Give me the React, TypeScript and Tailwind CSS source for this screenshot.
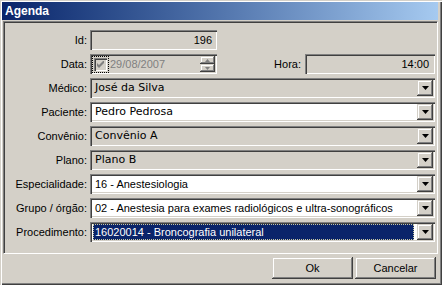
import * as React from "react"

const sunken =
  "shadow-[inset_1px_1px_0_#808080,inset_2px_2px_0_#404040,inset_-1px_-1px_0_#ffffff,inset_-2px_-2px_0_#d4d0c8]"
const raised =
  "shadow-[inset_-1px_-1px_0_#404040,inset_1px_1px_0_#d4d0c8,inset_-2px_-2px_0_#808080,inset_2px_2px_0_#ffffff]"

const tahoma = "font-['Liberation_Sans',Arial,sans-serif] text-[11px]"
const wide = "font-['DejaVu_Sans',Verdana,sans-serif] text-[11px]"

function Arrow() {
  return (
    <svg width="7" height="4" viewBox="0 0 7 4">
      <path d="M0 0h7L3.5 4z" fill="#000" />
    </svg>
  )
}

function DropButton() {
  return (
    <div className={`flex h-[16px] w-[16px] shrink-0 items-center justify-center bg-[#d4d0c8] ${raised}`}>
      <Arrow />
    </div>
  )
}

function Row({ label, children }: { label: string; children: React.ReactNode }) {
  return (
    <div className="flex h-[20px] items-center">
      <span className={`w-[86px] shrink-0 pr-[3px] text-right text-black ${tahoma}`}>{label}</span>
      {children}
    </div>
  )
}

function Combo({
  value,
  white,
  font,
  selected,
}: {
  value: string
  white?: boolean
  font: string
  selected?: boolean
}) {
  return (
    <div
      className={`flex h-[20px] flex-1 items-center pr-[2px] ${white ? "bg-white" : "bg-[#d4d0c8]"} ${sunken}`}
    >
      {selected ? (
        <div className="mx-[3px] flex h-[16px] flex-1 items-center border border-dotted border-[#c8c8a0] bg-[#0a246a] pl-[1px]">
          <span className={`truncate text-white ${font}`}>{value}</span>
        </div>
      ) : (
        <span className={`flex-1 truncate pl-[5px] text-black ${font}`}>{value}</span>
      )}
      <DropButton />
    </div>
  )
}

function Spinner() {
  const small = (up: boolean) => (
    <div className={`flex h-[8px] w-[15px] items-center justify-center bg-[#d4d0c8] ${raised}`}>
      <svg width="5" height="3" viewBox="0 0 5 3">
        <path d={up ? "M0 3h5L2.5 0z" : "M0 0h5L2.5 3z"} fill="#808080" />
      </svg>
    </div>
  )
  return (
    <div className="flex flex-col">
      {small(true)}
      {small(false)}
    </div>
  )
}

export default function App() {
  return (
    <div className="h-[285px] w-[442px] bg-[#d4d0c8] pb-[4px] pl-[2px] pr-[4px] pt-[2px] shadow-[inset_1px_1px_0_#d4d0c8,inset_2px_2px_0_#ffffff,inset_-1px_-1px_0_#404040,inset_-2px_-2px_0_#808080]">
      <div className="flex h-[18px] items-center bg-gradient-to-r from-[#0a246a] to-[#a6caf0] pl-[3px]">
        <span className="font-['Liberation_Sans',Arial,sans-serif] text-[12px] font-bold text-white">Agenda</span>
      </div>
      <div className="ml-[1px] mt-[1px] h-[233px] border-b border-l border-r border-t border-b-white border-l-[#808080] border-r-white border-t-[#808080] pr-[2px] pt-[8px] shadow-[inset_1px_1px_0_#404040]">
        <div className="flex flex-col gap-[4px]">
          <Row label="Id:">
            <div className={`flex h-[20px] w-[127px] items-center justify-end bg-[#d4d0c8] pr-[5px] ${sunken}`}>
              <span className={`text-black ${tahoma}`}>196</span>
            </div>
          </Row>
          <Row label="Data:">
            <div className={`flex h-[20px] w-[127px] items-center bg-[#d4d0c8] pl-[2px] pr-[2px] ${sunken}`}>
              <div className="border border-dotted border-black p-[1px]">
                <div className={`flex h-[13px] w-[13px] items-center justify-center bg-[#d4d0c8] ${sunken}`}>
                  <svg width="7" height="7" viewBox="0 0 7 7">
                    <path d="M0 2v3l2 2 5-5V-1L2 4z" fill="#808080" />
                  </svg>
                </div>
              </div>
              <span className={`ml-[1px] flex-1 text-[#808080] ${tahoma}`}>29/08/2007</span>
              <Spinner />
            </div>
            <span className={`ml-auto pr-[4px] text-black ${tahoma}`}>Hora:</span>
            <div className={`flex h-[20px] w-[130px] items-center justify-end bg-[#d4d0c8] pr-[6px] ${sunken}`}>
              <span className={`text-black ${tahoma}`}>14:00</span>
            </div>
          </Row>
          <Row label="Médico:">
            <Combo value="José da Silva" font={wide} />
          </Row>
          <Row label="Paciente:">
            <Combo value="Pedro Pedrosa" font={wide} white />
          </Row>
          <Row label="Convênio:">
            <Combo value="Convênio A" font={wide} />
          </Row>
          <Row label="Plano:">
            <Combo value="Plano B" font={wide} />
          </Row>
          <Row label="Especialidade:">
            <Combo value="16 - Anestesiologia" font={tahoma} white />
          </Row>
          <Row label="Grupo / órgão:">
            <Combo value="02 - Anestesia para exames radiológicos e ultra-sonográficos" font={tahoma} white />
          </Row>
          <Row label="Procedimento:">
            <Combo value="16020014 - Broncografia unilateral" font={tahoma} white selected />
          </Row>
        </div>
      </div>
      <div className="flex justify-end gap-[2px] pr-[2px] pt-[3px]">
        <button className={`h-[22px] w-[81px] bg-[#d4d0c8] text-black ${tahoma} ${raised}`}>Ok</button>
        <button className={`h-[22px] w-[81px] bg-[#d4d0c8] text-black ${tahoma} ${raised}`}>Cancelar</button>
      </div>
    </div>
  )
}
